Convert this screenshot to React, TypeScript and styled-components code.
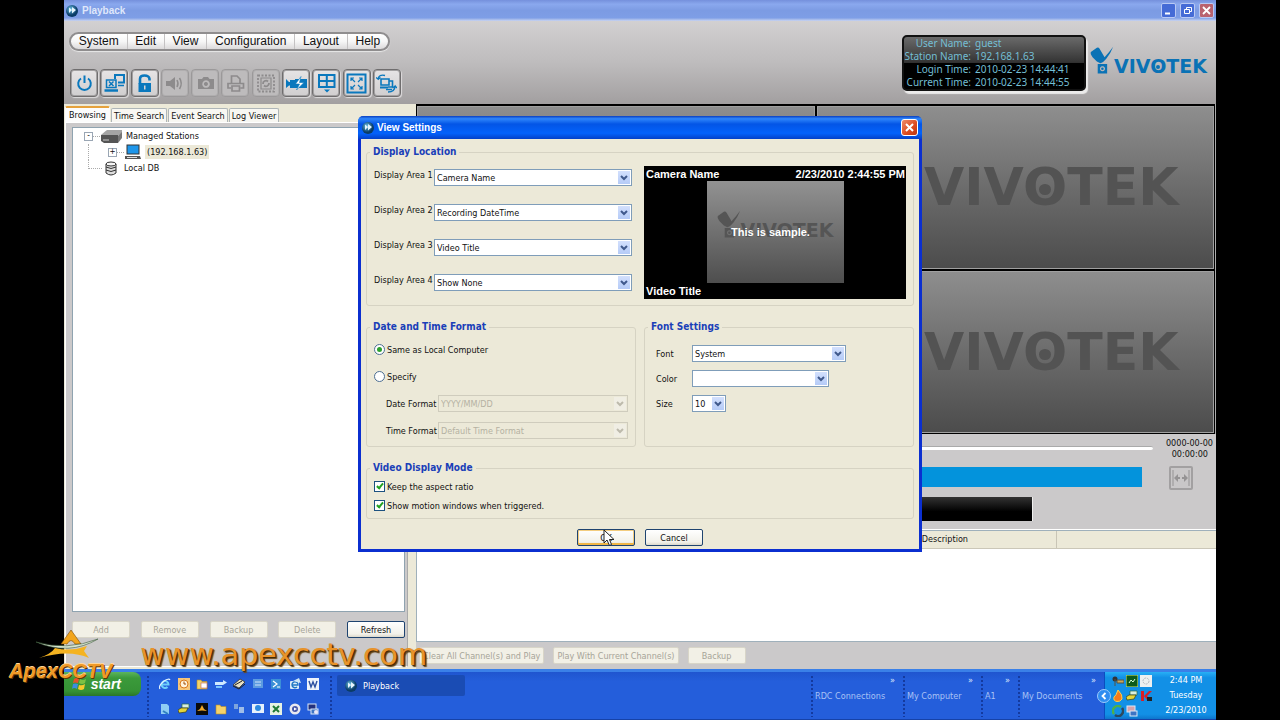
import React from "react";
import styled, { createGlobalStyle, css } from "styled-components";

const ui = '"DejaVu Sans Condensed", "DejaVu Sans", sans-serif';
const arial = '"Liberation Sans", Arial, sans-serif';

const GlobalStyle = createGlobalStyle`
  *, *::before, *::after { box-sizing: border-box; }
  body { margin: 0; background: #000; font: 9px/12px ${ui}; color: #111; }
  button, select, input { font: inherit; color: inherit; margin: 0; }
  button { padding: 0; cursor: default; }
`;

/* ---------- shell ---------- */
const Page = styled.div`
  position: relative;
  min-height: 100vh;
  padding: 0 5%;
  display: flex;
  flex-direction: column;
`;
const Frame = styled.div`
  flex: 1;
  display: flex;
  flex-direction: column;
  background: #cbc9ca;
`;
const TitleBar = styled.header`
  display: flex;
  align-items: center;
  gap: 4px;
  height: 21px;
  padding: 0 2px;
  background: linear-gradient(#7590dc, #8aa8ee 20%, #7c9be3 50%, #7e9ee6 85%, #c9d4f0);
  color: #dfe7fb;
  font: bold 10px/20px ${arial};
`;
const TitleText = styled.h1`
  flex: 1;
  margin: 0;
  font: inherit;
`;
const WinButton = styled.button<{ $close?: boolean }>`
  width: 15px;
  height: 15px;
  display: grid;
  place-items: center;
  border: 1px solid #b9c9f4;
  border-radius: 2px;
  background: ${(p) => (p.$close ? "#b9626f" : "#456bd6")};
`;
const Header = styled.div`
  display: flex;
  justify-content: space-between;
  padding: 11px 9px 7px 5px;
  background: linear-gradient(#d2d0d1, #bebcbd 50%, #a29fa0);
`;
const HeaderLeft = styled.div`
  display: flex;
  flex-direction: column;
  gap: 18px;
`;
const MenuPill = styled.nav`
  display: flex;
  align-items: center;
  width: 321px;
  height: 19px;
  border: 2px solid #8f8d8e;
  border-radius: 10px;
  background: linear-gradient(#fff, #f6f6f6 50%, #dcdadb);
  box-shadow: 0 1px 1px #e8e8e8;
`;
const MenuItem = styled.button`
  flex: 1 0 auto;
  padding: 0 7px;
  border: 0;
  background: none;
  font: 12px/15px ${arial};
  color: #111;
  & + & { border-left: 1px solid #c4c2c3; }
`;
const Toolbar = styled.div`
  display: flex;
  justify-content: space-between;
  width: 332px;
  padding-left: 1px;
`;
const ToolButton = styled.button`
  width: 28px;
  height: 28px;
  display: grid;
  place-items: center;
  border: 1px solid #6f6d6e;
  border-radius: 4px;
  background: linear-gradient(#e6e4e5, #d0cecf);
  box-shadow: inset 0 0 0 1px #a3a1a2, 1px 1px 1px #dedcdd;
  color: #0a78bd;
  &:disabled { border-color: #9b999a; background: #bdbbbc; color: #8d8b8c; box-shadow: inset 0 0 0 1px #b0aeaf; }
`;
const HeaderRight = styled.div`
  display: flex;
  align-items: flex-start;
  gap: 4px;
  padding-top: 3px;
`;
const StationInfo = styled.dl`
  display: grid;
  grid-template-columns: 64px 1fr;
  column-gap: 4px;
  width: 184px;
  margin: 0;
  padding: 0 2px 0 3px;
  border: 2px solid #111;
  border-radius: 5px;
  background: linear-gradient(#6a6a6a, #333 49%, #000 50%);
  box-shadow: 2px 3px 1px #ecebeb;
  font: 10px/13px "Noto Sans", sans-serif;
  color: #74bfd4;
  dt { display: flex; justify-content: flex-end; white-space: nowrap; }
  dd { margin: 0; white-space: nowrap; }
`;
const HeaderBrand = styled.div`
  padding-top: 11px;
`;

/* ---------- brand ---------- */
const BrandRow = styled.div<{ $color: string; $big?: boolean }>`
  display: flex;
  align-items: ${(p) => (p.$big ? "center" : "flex-end")};
  color: ${(p) => p.$color};
  font: bold ${(p) => (p.$big ? "52px/52px" : "19px/15px")} "DejaVu Sans", sans-serif;
  > svg { width: ${(p) => (p.$big ? "72px" : "24px")}; flex: none; }
`;
const Ring = styled.span`
  position: relative;
  &::after {
    content: "";
    position: absolute;
    left: 37%;
    top: 45%;
    width: 26%;
    height: 18%;
    border-radius: 50%;
    background: currentColor;
  }
`;
const Brand = ({ color, big }: { color: string; big?: boolean }) => (
  <BrandRow $color={color} $big={big}>
    <svg viewBox="0 0 28 33" fill="currentColor">
      <path d="M1 7L8 2Q10 1 11 3L17 13Q22 8 27 1Q24 9 19 15Q15 20 12 20L8 18L3 13Q0 9 1 7Z" />
      <path d="M9 21H20V32H9ZM14.500 23.500A3 3 0 1 0 14.600 23.500Z" fillRule="evenodd" />
      <circle cx="14.500" cy="26.500" r="1.500" />
    </svg>
    <span>VIV<Ring>O</Ring>TEK</span>
  </BrandRow>
);

/* ---------- main area ---------- */
const Main = styled.main`
  flex: 1;
  display: grid;
  grid-template-columns: 352px 1fr;
  background: #ece9d8;
`;
const Side = styled.section`
  display: flex;
  flex-direction: column;
  padding: 2px 8px 2px 1px;
`;
const Tabs = styled.div`
  display: flex;
  align-items: flex-end;
  gap: 1px;
  height: 16px;
`;
const Tab = styled.button<{ $active?: boolean }>`
  height: 14px;
  padding: 0 2px;
  border: 1px solid #aeb5b8;
  border-bottom: 0;
  border-radius: 2px 2px 0 0;
  background: #f8f7f2;
  white-space: nowrap;
  ${(p) =>
    p.$active &&
    css`
      height: 16px;
      padding: 0 3px;
      border-color: #e5a13c #fcfcfc #fcfcfc;
      border-top-width: 2px;
      background: #fcfcfc;
    `}
`;
const SideBody = styled.div`
  flex: 1;
  display: flex;
  flex-direction: column;
  gap: 9px;
  padding: 4px 2px 28px 6px;
  border: 1px solid #fff;
  border-right-color: #aaa;
  background: #cbc9ca;
`;
const Tree = styled.ul`
  flex: 1;
  margin: 0;
  padding: 0 0 0 11px;
  list-style: none;
  border: 1px solid #8fa3b0;
  background: #fff;
`;
const Node = styled.li`
  display: flex;
  align-items: center;
  height: 16px;
  svg { flex: none; }
`;
const Expander = styled.button`
  width: 9px;
  height: 9px;
  border: 1px solid #9aa6b4;
  background: #fff;
  font: 8px/6px ${ui};
`;
const Dash = styled.span`
  width: 7px;
  border-top: 1px dotted #aaa;
`;
const Trunk = styled.span<{ $end?: boolean }>`
  align-self: flex-start;
  width: ${(p) => (p.$end ? "14px" : "20px")};
  height: ${(p) => (p.$end ? "9px" : "16px")};
  margin-left: 4px;
  border-left: 1px dotted #aaa;
  border-bottom: ${(p) => (p.$end ? "1px dotted #aaa" : "0")};
`;
const NodeLabel = styled.span<{ $selected?: boolean }>`
  margin-left: 3px;
  padding: ${(p) => (p.$selected ? "1px 2px" : "0")};
  background: ${(p) => (p.$selected ? "#ece9d8" : "none")};
`;
const Spread = styled.div`
  display: flex;
  justify-content: space-between;
`;
const PushButton = styled.button<{ $focus?: boolean; $wide?: boolean }>`
  min-width: 58px;
  height: 17px;
  padding: 0 ${(p) => (p.$wide ? "3px" : "2px")};
  border: 1px solid #1f4470;
  border-radius: 2px;
  background: linear-gradient(#fff, #f2f1ea 80%, #dcd8cb);
  box-shadow: ${(p) => (p.$focus ? "inset 0 -2px 0 #f0b545, inset 0 0 0 1px #f3cd80" : "none")};
  white-space: nowrap;
  &:disabled { border-color: #d8d5c8; background: #f2f0e6; color: #a6a498; }
`;

const Right = styled.section`
  display: flex;
  flex-direction: column;
  background: #cbc9ca;
`;
const Wall = styled.div`
  flex: 1;
  display: grid;
  grid-template-columns: 1fr 1fr;
  grid-template-rows: 1fr 1fr;
  gap: 2px;
  padding: 2px 1px 1px;
  background: #000;
  border-right: 1px solid #aaa;
`;
const Cell = styled.div`
  display: flex;
  align-items: center;
  justify-content: center;
  border: 1px solid #a0a0a0;
  background: linear-gradient(#8e8e8e, #6c6c6c 50%, #4c4c4c);
`;
const Controls = styled.div`
  display: grid;
  grid-template-columns: 1fr 60px;
  height: 96px;
  padding: 4px 3px 0 0;
  border-bottom: 1px solid #fff;
`;
const Bars = styled.div`
  display: flex;
  flex-direction: column;
  gap: 10px;
  padding-top: 8px;
`;
const Track = styled.div`
  height: 4px;
  border-top: 1px solid #aaa;
  border-radius: 2px;
  background: #fff;
  margin-bottom: 7px;
`;
const TimeBar = styled.div`
  height: 20px;
  margin-right: 11px;
  background: #0393dc;
`;
const StatusBar = styled.div`
  height: 24px;
  margin-right: 120px;
  border-right: 1px solid #eee;
  background: linear-gradient(#333, #000 60%);
`;
const Stamp = styled.div`
  display: flex;
  flex-direction: column;
  align-items: flex-end;
  line-height: 11px;
  white-space: nowrap;
  span:nth-child(2) { padding-right: 5px; }
`;
const FitButton = styled.button`
  width: 24px;
  height: 24px;
  margin: 6px 20px 0 0;
  display: grid;
  place-items: center;
  border: 2px solid #a2a0a1;
  border-radius: 2px;
  background: #c9c7c8;
  color: #959394;
`;
const EventTable = styled.table`
  width: 100%;
  border-collapse: collapse;
  th {
    height: 17px;
    padding: 0 0 0 1px;
    border-bottom: 1px solid #cbc7b8;
    border-right: 1px solid #c9c5b6;
    background: #ece9d8;
    font-weight: normal;
    text-align: left;
  }
  th:last-child { border-right: 0; }
`;
const TableBox = styled.div`
  height: 112px;
  border: 1px solid #9fb0bb;
  border-width: 1px 0 1px 1px;
  background: #fff;
`;
const PlayRow = styled.div`
  display: flex;
  gap: 9px;
  padding: 5px 5px 5px 3px;
`;

/* ---------- dialog ---------- */
const Dialog = styled.div`
  position: absolute;
  top: 116px;
  left: 50%;
  width: 564px;
  transform: translateX(-50%);
  border: 3px solid #0b2fd0;
  border-top: 0;
  border-radius: 6px 6px 0 0;
  background: #ece9d8;
`;
const DialogTitle = styled.div`
  display: flex;
  align-items: center;
  gap: 3px;
  height: 23px;
  margin: 0 -3px;
  padding: 0 4px;
  border-radius: 5px 5px 0 0;
  background: linear-gradient(#0a3fc0, #2f86fb 12%, #0355e6 35%, #0362fb 75%, #0340c8);
  color: #fff;
  font: bold 10px/23px ${arial};
  h2 { flex: 1; margin: 0; font: inherit; }
`;
const DialogClose = styled.button`
  width: 17px;
  height: 17px;
  display: grid;
  place-items: center;
  border: 1px solid #fff;
  border-radius: 3px;
  background: linear-gradient(135deg, #ee8b6b, #dc4a1e 60%, #b93510);
`;
const DialogBody = styled.form`
  display: flex;
  flex-direction: column;
  gap: 14px;
  padding: 6px 5px 3px;
`;
const Group = styled.fieldset`
  min-width: 0;
  margin: 0;
  padding: 0 7px;
  border: 1px solid #d6d3c3;
  border-radius: 3px;
`;
const Legend = styled.legend`
  margin-left: -4px;
  padding: 0 3px;
  color: #1a3fb8;
  font: bold 10px/14px ${ui};
`;
const TwoCol = styled.div`
  display: grid;
  grid-template-columns: 1fr 1fr;
  gap: 8px;
`;
const LocationRow = styled.div`
  display: flex;
  justify-content: space-between;
  padding: 7px 0 6px;
`;
const Areas = styled.div`
  display: grid;
  grid-template-columns: 60px 198px;
  row-gap: 18px;
  align-content: start;
  padding-top: 3px;
  label { white-space: nowrap; }
`;
const Rows = styled.div<{ $gap: number; $top: number; $bottom: number }>`
  display: flex;
  flex-direction: column;
  gap: ${(p) => p.$gap}px;
  padding: ${(p) => p.$top}px 0 ${(p) => p.$bottom}px;
`;
const Field = styled.div<{ $label: number; $indent: number }>`
  display: flex;
  align-items: center;
  padding-left: ${(p) => p.$indent}px;
  label { width: ${(p) => p.$label}px; white-space: nowrap; }
`;
const SelectBox = styled.span<{ $width?: number }>`
  position: relative;
  display: block;
  width: ${(p) => (p.$width ? p.$width + "px" : "100%")};
  height: 17px;
  select {
    appearance: none;
    display: block;
    width: 100%;
    height: 17px;
    padding: 0 0 0 2px;
    border: 1px solid #7f9db9;
    border-radius: 0;
    background: #fff;
    opacity: 1;
  }
  svg {
    position: absolute;
    top: 2px;
    right: 2px;
    width: 12px;
    height: 13px;
    background: linear-gradient(#d3e0fd, #b5cbf7);
    color: #40598c;
    pointer-events: none;
  }
  select:disabled { border-color: #cfccbd; background: #ece9d8; color: #b4b1a2; }
  select:disabled + svg { background: #f0eee4; color: #bdbaac; }
`;
const Tick = styled.label`
  display: flex;
  align-items: center;
  gap: 2px;
  height: 17px;
`;
const Check = styled.input`
  appearance: none;
  width: 11px;
  height: 11px;
  border: 1px solid #1c5180;
  background: #fff;
  display: grid;
  place-items: center;
  &[type="radio"] { border-radius: 50%; border-color: #4d6f93; }
  &[type="radio"]:checked::before {
    content: "";
    width: 5px;
    height: 5px;
    border-radius: 50%;
    background: #2da12d;
  }
  &[type="checkbox"]:checked::before {
    content: "";
    width: 4px;
    height: 7px;
    margin-bottom: 2px;
    border: solid #21a121;
    border-width: 0 2px 2px 0;
    transform: rotate(40deg);
  }
`;
const Preview = styled.div`
  width: 262px;
  height: 133px;
  display: grid;
  grid-template-rows: 15px 1fr 16px;
  background: #000;
  color: #fff;
  font: bold 11px/16px ${arial};
`;
const PreviewLine = styled.div`
  display: flex;
  justify-content: space-between;
  padding: 0 1px 0 2px;
`;
const Sample = styled.div`
  position: relative;
  width: 137px;
  justify-self: center;
  display: flex;
  align-items: flex-start;
  justify-content: center;
  padding-top: 29px;
  background: linear-gradient(#929292, #4e4e4e);
`;
const SampleText = styled.span`
  position: absolute;
  inset: 0 0 0 -9px;
  display: grid;
  place-items: center;
`;
const DialogButtons = styled.div`
  display: flex;
  justify-content: center;
  gap: 10px;
  margin-top: -4px;
`;
const Pointer = styled.svg`
  position: absolute;
  left: 242px;
  bottom: 2px;
  width: 12px;
  height: 18px;
`;

/* ---------- task bar ---------- */
const TaskBar = styled.footer`
  display: flex;
  height: 51px;
  border-top: 3px solid #3a80e8;
  border-bottom: 1px solid #1642a8;
  background: linear-gradient(#1f55cf, #245edb 20%);
  color: #fff;
`;
const StartButton = styled.button`
  display: flex;
  align-items: center;
  justify-content: flex-end;
  gap: 4px;
  width: 77px;
  height: 24px;
  margin-right: 6px;
  padding-right: 20px;
  border: 0;
  border-radius: 0 8px 8px 0;
  background: linear-gradient(#5cb55c, #3b9a3b 25%, #359235 80%, #2a762a);
  color: #fff;
  font: italic bold 14px/22px ${arial};
`;
const Grip = styled.span`
  flex: none;
  width: 4px;
  margin: 4px 0 2px;
  background: radial-gradient(circle at 1px 1px, #143a9e 1px, transparent 1px) 0 0 / 4px 4px;
`;
const QuickLaunch = styled.div`
  display: grid;
  grid-template-columns: repeat(9, 12px);
  justify-content: space-between;
  align-content: space-between;
  width: 160px;
  margin: 0 11px 0 8px;
  padding: 6px 0 4px;
`;
const TaskButton = styled.button`
  display: flex;
  align-items: center;
  gap: 6px;
  width: 128px;
  height: 21px;
  margin: 3px auto 0 3px;
  padding-left: 8px;
  border: 0;
  border-radius: 2px;
  background: #1a4cb4;
  color: #fff;
`;
const Band = styled.div<{ $width: number }>`
  display: flex;
  width: ${(p) => p.$width}px;
  color: #a9c2f5;
  white-space: nowrap;
`;
const BandText = styled.div`
  flex: 1;
  display: flex;
  flex-direction: column;
  padding: 2px 8px 0 0;
  span:first-child { align-self: flex-end; line-height: 12px; color: #dfe8fc; }
  span:last-child { line-height: 20px; }
`;
const Tray = styled.div`
  display: flex;
  align-items: center;
  gap: 9px;
  width: 112px;
  padding-right: 5px;
  border-left: 1px solid #0b4ec0;
  background: linear-gradient(#28b0f5, #1290e6 12%, #1290e6 90%, #0d75cc);
`;
const TrayArrow = styled.svg`
  width: 14px;
  height: 14px;
  margin: 0 -8px;
  flex: none;
`;
const TrayIcons = styled.div`
  display: grid;
  grid-template-columns: repeat(3, 12px);
  gap: 3px 2px;
`;
const Clock = styled.time`
  flex: 1;
  text-align: center;
  line-height: 15px;
  white-space: pre-line;
`;

/* ---------- broadcast overlay ---------- */
const Overlay = styled.div`
  position: absolute;
  left: 9px;
  bottom: 38px;
  display: flex;
  align-items: flex-end;
  gap: 28px;
  pointer-events: none;
`;
const ApexBadge = styled.div`
  display: flex;
  flex-direction: column;
  align-items: center;
  color: #f09a28;
  font: italic bold 20px/22px ${arial};
  text-shadow: 1px 1px 0 #5a3606, 0 -1px 0 #ffd79a;
  svg { margin-left: 12px; }
`;
const SiteName = styled.div`
  color: #e8932a;
  font: 30px/34px "DejaVu Sans", sans-serif;
  padding-bottom: 10px;
  text-shadow: 1px 1px 1px #3d2604, 2px 2px 1px #6b4a1c;
`;

/* ---------- drawings ---------- */
const AppIcon = () => (
  <svg width="12" height="12" viewBox="0 0 12 12">
    <defs>
      <radialGradient id="orb" cx=".4" cy=".35"><stop offset="0" stopColor="#6cc4ea" /><stop offset="1" stopColor="#0a3c66" /></radialGradient>
    </defs>
    <circle cx="6" cy="6" r="6" fill="url(#orb)" />
    <path d="M3 2.500L6 5L3 8ZM6 2L10 5L6 8.500Z" fill="#e6f5fc" />
  </svg>
);

const toolIcons: { name: string; off?: boolean; art: React.ReactNode }[] = [
  { name: "Power", art: <path d="M7 5.500A6.300 6.300 0 1 0 14 5.500M10.500 2.500V10" fill="none" stroke="currentColor" strokeWidth="2" /> },
  {
    name: "Disconnect",
    art: (
      <g fill="none" stroke="currentColor">
        <path strokeWidth="2" d="M11 6V2H20V9.500H14" /><path strokeWidth="1.500" d="M14 12.500H20M2.500 7H12V14.500H2.500Z" />
        <path strokeWidth="1.500" d="M5 8.500L9.500 13M9.500 8.500L5 13" /><path strokeWidth="2.500" d="M0.500 17.500H14" />
      </g>
    ),
  },
  { name: "Unlock", art: <g><path d="M6 11V6Q6 2.500 10.500 2.500T15.500 6V7.500" fill="none" stroke="currentColor" strokeWidth="2.600" /><path fillRule="evenodd" d="M4.500 10H17V19H4.500ZM10 12.500V16.500H11.500V12.500Z" fill="currentColor" /></g> },
  { name: "Volume", off: true, art: <g><path d="M2 8H6L11 4V17L6 13H2Z" fill="currentColor" /><path d="M13 7Q15 10.500 13 14M15.500 5Q19 10.500 15.500 16" fill="none" stroke="currentColor" strokeWidth="1.500" /></g> },
  { name: "Snapshot", off: true, art: <path fillRule="evenodd" d="M3 6H7L8.500 4H13L14.500 6H19V16H3ZM11 7.200A3.800 3.800 0 1 0 11.100 7.200ZM11 9A2 2 0 1 1 10.900 9Z" fill="currentColor" /> },
  { name: "Print", off: true, art: <g fill="none" stroke="currentColor" strokeWidth="1.700"><path d="M6.500 10V3H12L15 6V10" /><path d="M6 15H3V10.500H18.500V15H15.500M7 13H14.500V18H7Z" /></g> },
  { name: "Export", off: true, art: <g fill="none" stroke="currentColor" strokeWidth="1.800"><rect x="3" y="2.500" width="16" height="16" strokeDasharray="2 1.500" /><path strokeWidth="1.200" d="M6 5H16V16H6Z" /><path d="M8 11A3 3 0 0 1 13 8.500M14 10A3 3 0 0 1 9 12.500" /></g> },
  { name: "Record", art: <g><path fill="currentColor" d="M0 6L3 9H4V7H9.500V15H4V12.500H3L0 15ZM9 6H21V15H9Z" /><path d="M15 3.500L9.500 11H13.500L10.500 17L18 9.500H13.500Z" fill="#fff" stroke="currentColor" strokeWidth=".6" /></g> },
  { name: "Layout", art: <g><path fill="none" stroke="currentColor" strokeWidth="2" d="M3 2H18.500V14H3ZM10.800 2V14M3 8H18" /><path d="M8 16.500H14L11 19.500Z" fill="currentColor" /></g> },
  {
    name: "Full screen",
    art: (
      <g fill="none" stroke="currentColor">
        <rect x="1.500" y="1.500" width="18" height="18" strokeWidth="2" /><path strokeWidth="1.200" d="M5 5L9 9M16 5L12 9M5 16L9 12M16 16L12 12M5 8V5H8M13 5H16V8M16 13V16H13M8 16H5V13" />
      </g>
    ),
  },
  {
    name: "Switch station",
    art: (
      <g fill="none" stroke="currentColor">
        <path strokeWidth="1.600" d="M5 6H13V12H5ZM13 8H16.500V14H12M10 16.500H16" /><path strokeWidth="2" d="M4 14.500H12" />
        <path strokeWidth="1.300" d="M9 2.500Q3 1 2 6L0 4.500M2 6.500L4.500 4.500M12 19Q19 19 19 13L16.500 15M19 13L21 15" />
      </g>
    ),
  },
];

const Chevron = () => (
  <svg viewBox="0 0 12 13"><path d="M3 5L6 8L9 5" fill="none" stroke="currentColor" strokeWidth="2" /></svg>
);

const Select = ({ id, value, width, disabled }: { id: string; value: string; width?: number; disabled?: boolean }) => (
  <SelectBox $width={width}>
    <select id={id} disabled={disabled} defaultValue={value}><option value={value}>{value}</option></select>
    <Chevron />
  </SelectBox>
);

const Glyph = ({ children }: { children: React.ReactNode }) => (
  <svg width="12" height="12" viewBox="0 0 12 12">{children}</svg>
);
const monitor = (c: string) => <g><rect x="1" y="1" width="8" height="6" fill={c} stroke="#dbe7f7" /><rect x="4" y="6" width="7" height="5" fill="#3d74c4" stroke="#dbe7f7" /></g>;
const folder = <path d="M1 2H5L6 3.500H11V11H1Z" fill="#f4d26a" stroke="#b98c24" strokeWidth=".6" />;
const printer = <g><path d="M4 1H11V5H4Z" fill="#d8efe0" stroke="#2c6a46" strokeWidth=".7" /><path d="M0 7L3 5H10L8 9L1 10Z" fill="#e4d53a" stroke="#3d3d10" strokeWidth=".7" /></g>;

const quickIcons: React.ReactNode[] = [
  <g><path d="M3 6.500H9.500A3.500 3.500 0 1 0 8.500 9" fill="none" stroke="#6fd0fb" strokeWidth="2" /><path d="M1 11Q-1 8 5 3Q10 0 11 2" fill="none" stroke="#e4f4ff" strokeWidth="1.200" /></g>,
  <g><rect width="12" height="12" fill="#f6c67a" /><circle cx="6" cy="6" r="4" fill="#fff3dc" stroke="#d9791c" /><path d="M6 3.500V6H8" fill="none" stroke="#a04d08" /></g>,
  <g>{folder}<rect x="5" y="5" width="6" height="5" fill="#fff" stroke="#b66" strokeWidth=".6" /></g>,
  <g><path d="M0 4H8V2L12 4.500L8 7H0Z" fill="#cfeaff" /><path d="M1 8H7V10H1Z" fill="#7cc6ff" /></g>,
  <g><path d="M0 7L7 1L12 4L6 10Z" fill="#e8e0c4" stroke="#333" strokeWidth=".8" /><path d="M0 8L6 11L12 6M2 7L9 3" fill="none" stroke="#222" /></g>,
  <g><rect x="1" y="1" width="10" height="9" fill="#5c9be0" /><path d="M3 4H9M3 7H9" stroke="#cfe3fa" /></g>,
  <g><rect x="1" y="1" width="10" height="10" fill="#3b8fd6" /><path d="M3 3L7 6L3 9M7 9H10" fill="none" stroke="#fff" strokeWidth="1.200" /></g>,
  <g><rect x="1" y="3" width="9" height="8" rx="1" fill="#dcecf8" /><path d="M3 7H9A3 3 0 1 0 8 9" fill="none" stroke="#2178c4" strokeWidth="1.400" /><path d="M4 3L10 0L12 5" fill="#cfe6f5" /></g>,
  <g><rect width="12" height="12" fill="#eef3fb" /><path d="M2 3L4 9L6 4L8 9L10 3" fill="none" stroke="#2b4fa0" strokeWidth="1.400" /></g>,
  <g><path d="M2 1H8L10 3V11H2Z" fill="#8fcdf4" /><path d="M4 8L9 11" stroke="#2f7fc1" strokeWidth="2" /></g>,
  <g>{printer}</g>,
  <g><rect width="12" height="12" fill="#0a0a0a" /><path d="M6 2L8 6L11 8L6 7.500L1 8L4 6Z" fill="#f0a92c" /></g>,
  <g>{folder}</g>,
  <g><rect x="1" y="1" width="4" height="5" fill="#7ea4dc" /><rect x="6" y="4" width="5" height="6" fill="#9fbde8" /></g>,
  <g><rect x="0" y="1" width="12" height="9" fill="#e6f1fc" /><circle cx="6" cy="5" r="3" fill="#2d8be0" /></g>,
  <g><rect width="12" height="12" fill="#e6f2e2" /><path d="M3 3L9 9M9 3L3 9" stroke="#1f7a34" strokeWidth="2" /></g>,
  <g><circle cx="6" cy="6" r="5.500" fill="#e9e9ef" /><circle cx="6" cy="6" r="3" fill="#4455a8" /><path d="M5 4.500L8 6L5 7.500Z" fill="#fff" /></g>,
  <g>{monitor("#23317d")}<circle cx="9" cy="9" r="2" fill="#e8e6f8" /></g>,
];
const trayIcons: React.ReactNode[] = [
  <g><circle cx="3" cy="4" r="2.500" fill="#333" /><path d="M3 4V11M5 5H12V8H5Z" stroke="#554" fill="#cba75a" /></g>,
  <g><rect width="12" height="12" fill="#0c5a1c" stroke="#d9e86a" /><path d="M3 8L5 5L7 7L9 4" stroke="#d8ffd8" fill="none" /></g>,
  <g><rect width="12" height="12" fill="#eef0f0" /><circle cx="6" cy="6" r="3" fill="none" stroke="#b6babf" strokeDasharray="2 1" /></g>,
  <path d="M6 0Q11 5 10 9Q8 12 5 11.500Q1 11 2 7Q4 6 6 0Z" fill="#f47b1c" stroke="#fbd04a" />,
  <g>{printer}</g>,
  <g><path d="M1 1H4V11H1Z" fill="#d81f26" /><path d="M4 6L9 1H12L7 6L12 11H8Z" fill="#d81f26" /><path d="M7 7H12V11H7Z" fill="#222" /></g>,
  <g fill="none" strokeWidth="2.500"><path d="M2 9A5 5 0 0 1 9 2" stroke="#4db04a" /><path d="M10 3A5 5 0 0 1 3 10" stroke="#2b4a60" /></g>,
  <g>{monitor("#d7a3ac")}</g>,
];

const bands: [string, number][] = [["RDC Connections", 92], ["My Computer", 78], ["A1", 37], ["My Documents", 86]];
const areas = ["Camera Name", "Recording DateTime", "Video Title", "Show None"];

export default function App() {
  return (
    <Page>
      <GlobalStyle />
      <Frame>
        <TitleBar>
          <AppIcon />
          <TitleText>Playback</TitleText>
          <WinButton aria-label="Minimize"><svg width="11" height="11"><path d="M2 8.500H7" stroke="#fff" strokeWidth="2" /></svg></WinButton>
          <WinButton aria-label="Restore"><svg width="11" height="11" fill="none" stroke="#fff"><path d="M4.500 4V2.500H9.500V6.500H8M2.500 4.500H7.500V8.500H2.500Z" /></svg></WinButton>
          <WinButton $close aria-label="Close"><svg width="11" height="11"><path d="M2 2L9 9M9 2L2 9" stroke="#fff" strokeWidth="1.800" /></svg></WinButton>
        </TitleBar>
        <Header>
          <HeaderLeft>
            <MenuPill>
              {["System", "Edit", "View", "Configuration", "Layout", "Help"].map((m) => <MenuItem key={m}>{m}</MenuItem>)}
            </MenuPill>
            <Toolbar>
              {toolIcons.map((t) => (
                <ToolButton key={t.name} aria-label={t.name} disabled={t.off}>
                  <svg width="21" height="21" viewBox="0 0 21 21">{t.art}</svg>
                </ToolButton>
              ))}
            </Toolbar>
          </HeaderLeft>
          <HeaderRight>
            <StationInfo>
              <dt>User Name:</dt><dd>guest</dd>
              <dt>Station Name:</dt><dd>192.168.1.63</dd>
              <dt>Login Time:</dt><dd>2010-02-23 14:44:41</dd>
              <dt>Current Time:</dt><dd>2010-02-23 14:44:55</dd>
            </StationInfo>
            <HeaderBrand><Brand color="#0a72b5" /></HeaderBrand>
          </HeaderRight>
        </Header>

        <Main>
          <Side>
            <Tabs>
              <Tab $active>Browsing</Tab><Tab>Time Search</Tab><Tab>Event Search</Tab><Tab>Log Viewer</Tab>
            </Tabs>
            <SideBody>
              <Tree>
                <Node>
                  <Expander aria-label="Collapse">-</Expander><Dash />
                  <svg width="23" height="15" viewBox="0 0 23 15"><path d="M1 6Q2 5 7 1H22V4L18 7Z" fill="#a5a5a5" /><path d="M1 6H18V14H4L1 12Z" fill="#555" /><path d="M18 7L22 3V9L18 14Z" fill="#777" /><path d="M3 11H9" stroke="#ccc" /></svg>
                  <NodeLabel>Managed Stations</NodeLabel>
                </Node>
                <Node>
                  <Trunk /><Expander aria-label="Expand">+</Expander><Dash />
                  <svg width="18" height="16" viewBox="0 0 18 16"><rect x="3" y="1" width="12" height="9" fill="#1e96ea" stroke="#333" /><path d="M1 12H16L17 15H1Z" fill="#555" /><path d="M3 13.500H13" stroke="#ddd" /></svg>
                  <NodeLabel $selected>(192.168.1.63)</NodeLabel>
                </Node>
                <Node>
                  <Trunk $end />
                  <svg width="19" height="15" viewBox="0 0 19 15"><path d="M4 3V12Q9 16 14 12V3" fill="#ddd" stroke="#333" /><ellipse cx="9" cy="3" rx="5" ry="2" fill="#f4f4f4" stroke="#333" /><path d="M4 6Q9 9 14 6M4 9Q9 12 14 9" fill="none" stroke="#333" /></svg>
                  <NodeLabel>Local DB</NodeLabel>
                </Node>
              </Tree>
              <Spread>
                {["Add", "Remove", "Backup", "Delete"].map((b) => <PushButton key={b} disabled>{b}</PushButton>)}
                <PushButton>Refresh</PushButton>
              </Spread>
            </SideBody>
          </Side>

          <Right>
            <Wall>
              {[0, 1, 2, 3].map((n) => <Cell key={n}>{n % 2 === 1 && <Brand big color="#535353" />}</Cell>)}
            </Wall>
            <Controls>
              <Bars><Track /><TimeBar /><StatusBar /></Bars>
              <Stamp>
                <span>0000-00-00</span><span>00:00:00</span>
                <FitButton aria-label="Fit range"><svg width="20" height="16" viewBox="0 0 20 16"><path d="M2 0V16M18 0V16" stroke="currentColor" /><path d="M3 8L7 4V7H9V9H7V12ZM17 8L13 4V7H11V9H13V12Z" fill="currentColor" /></svg></FitButton>
              </Stamp>
            </Controls>
            <TableBox>
              <EventTable>
                <colgroup><col width="63%" /><col width="17%" /><col width="20%" /></colgroup>
                <thead><tr><th aria-label="Event" /><th>Description</th><th aria-label="Notes" /></tr></thead>
              </EventTable>
            </TableBox>
            <PlayRow>
              <PushButton $wide disabled>Clear All Channel(s) and Play</PushButton>
              <PushButton $wide disabled>Play With Current Channel(s)</PushButton>
              <PushButton disabled>Backup</PushButton>
            </PlayRow>
          </Right>
        </Main>

        <TaskBar>
          <StartButton>
            <svg width="15" height="14" viewBox="0 0 15 14"><path d="M2 2Q4 0 7 2L6 6Q3 5 1 6Z" fill="#e8502a" /><path d="M8 2Q11 4 14 2L13 6Q10 8 7 6Z" fill="#7bc143" /><path d="M1 7Q3 6 6 7L5 12Q2 10 0 12Z" fill="#3b8de0" /><path d="M7 8Q10 9 13 7L12 12Q9 14 6 12Z" fill="#f6c92c" /></svg>
            start
          </StartButton>
          <Grip />
          <QuickLaunch>{quickIcons.map((q, i) => <Glyph key={i}>{q}</Glyph>)}</QuickLaunch>
          <Grip />
          <TaskButton><AppIcon />Playback</TaskButton>
          {bands.map(([name, w]) => (
            <Band key={name} $width={w}><Grip /><BandText><span>»</span><span>{name}</span></BandText></Band>
          ))}
          <Tray>
            <TrayArrow viewBox="0 0 14 14"><circle cx="7" cy="7" r="6.500" fill="#2f8df0" stroke="#9cc9fa" /><path d="M8.500 4L5.500 7L8.500 10" fill="none" stroke="#fff" strokeWidth="1.800" /></TrayArrow>
            <TrayIcons>{trayIcons.map((t, i) => <Glyph key={i}>{t}</Glyph>)}</TrayIcons>
            <Clock>{"2:44 PM\nTuesday\n2/23/2010"}</Clock>
          </Tray>
        </TaskBar>
      </Frame>

      <Dialog role="dialog" aria-label="View Settings">
        <DialogTitle>
          <AppIcon /><h2>View Settings</h2>
          <DialogClose aria-label="Close dialog"><svg width="13" height="13"><path d="M3 3L10 10M10 3L3 10" stroke="#fff" strokeWidth="2" /></svg></DialogClose>
        </DialogTitle>
        <DialogBody onSubmit={(e) => e.preventDefault()}>
          <Group>
            <Legend>Display Location</Legend>
            <LocationRow>
              <Areas>
                {areas.map((a, i) => (
                  <React.Fragment key={a}>
                    <label htmlFor={`area${i}`}>Display Area {i + 1}</label>
                    <Select id={`area${i}`} value={a} />
                  </React.Fragment>
                ))}
              </Areas>
              <Preview>
                <PreviewLine><span>Camera Name</span><span>2/23/2010 2:44:55 PM</span></PreviewLine>
                <Sample><Brand color="#555" /><SampleText>This is sample.</SampleText></Sample>
                <PreviewLine><span>Video Title</span></PreviewLine>
              </Preview>
            </LocationRow>
          </Group>
          <TwoCol>
            <Group>
              <Legend>Date and Time Format</Legend>
              <Rows $gap={10} $top={7} $bottom={7}>
                <Tick><Check type="radio" name="format" defaultChecked />Same as Local Computer</Tick>
                <Tick><Check type="radio" name="format" />Specify</Tick>
                <Field $indent={12} $label={52}><label htmlFor="date">Date Format</label><Select id="date" value="YYYY/MM/DD" width={190} disabled /></Field>
                <Field $indent={12} $label={52}><label htmlFor="time">Time Format</label><Select id="time" value="Default Time Format" width={190} disabled /></Field>
              </Rows>
            </Group>
            <Group>
              <Legend>Font Settings</Legend>
              <Rows $gap={8} $top={11} $bottom={7}>
                <Field $indent={4} $label={36}><label htmlFor="font">Font</label><Select id="font" value="System" width={154} /></Field>
                <Field $indent={4} $label={36}><label htmlFor="color">Color</label><Select id="color" value=" " width={137} /></Field>
                <Field $indent={4} $label={36}><label htmlFor="size">Size</label><Select id="size" value="10" width={34} /></Field>
              </Rows>
            </Group>
          </TwoCol>
          <Group>
            <Legend>Video Display Mode</Legend>
            <Rows $gap={2} $top={3} $bottom={4}>
              <Tick><Check type="checkbox" defaultChecked />Keep the aspect ratio</Tick>
              <Tick><Check type="checkbox" defaultChecked />Show motion windows when triggered.</Tick>
            </Rows>
          </Group>
          <DialogButtons>
            <PushButton $focus type="submit">OK</PushButton>
            <PushButton type="button">Cancel</PushButton>
          </DialogButtons>
        </DialogBody>
        <Pointer viewBox="0 0 12 18"><path d="M1 1V14L4 11L6.500 16.500L8.500 15.500L6.500 10.500H11Z" fill="#fff" stroke="#222" /></Pointer>
      </Dialog>

      <Overlay>
        <ApexBadge>
          <svg width="64" height="30" viewBox="0 0 64 30">
            <path d="M36 0L46 14L40 14Q36 7 32 14L26 14Z" fill="#f2a51c" stroke="#7a4c08" strokeWidth=".6" />
            <path d="M1 12Q32 21 63 9Q34 26 1 12Z" fill="#d5e3cf" stroke="#3d5a3a" strokeWidth=".6" />
            <path d="M20 18Q36 22 52 16L49 21L54 28Q34 19 4 28Q16 24 20 18Z" fill="#f4b321" />
          </svg>
          ApexCCTV
        </ApexBadge>
        <SiteName>www.apexcctv.com</SiteName>
      </Overlay>
    </Page>
  );
}
